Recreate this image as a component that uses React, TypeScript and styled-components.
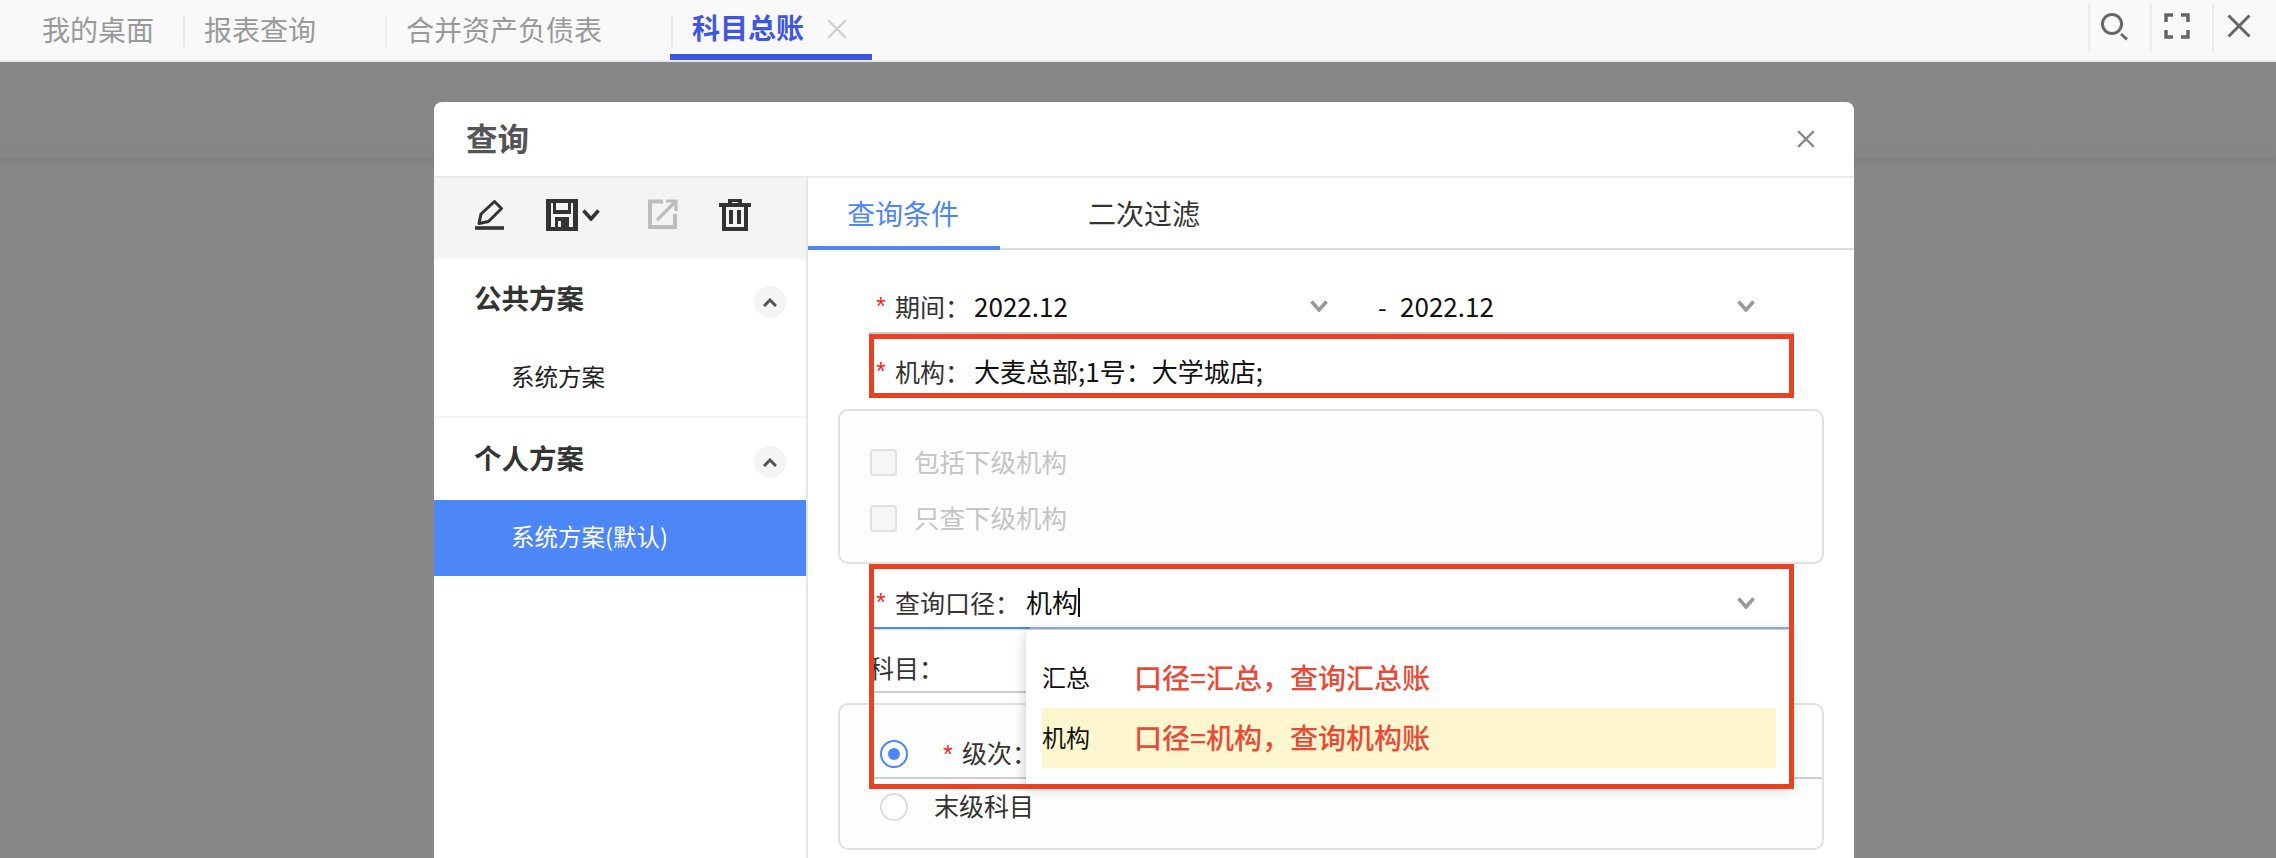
import styled, { createGlobalStyle } from "styled-components";

const GlobalStyle = createGlobalStyle`
  html, body {
    margin: 0;
    height: 858px;
    overflow: hidden;
    background: #888;
    font-family: "Noto Sans CJK SC", "Noto Sans", sans-serif;
  }
  * { box-sizing: border-box; }
  svg { display: block; flex: none; }
`;

const TopBar = styled.header`
  height: 62px;
  display: flex;
  justify-content: space-between;
  background: #f9f9fa;
  border-bottom: 2px solid #e8eaf0;
`;

const Tabs = styled.nav`
  display: flex;
  align-items: flex-start;
  padding-left: 42px;
`;

const Tab = styled.div<{ $trail: number }>`
  height: 60px;
  padding: 0 ${(p) => p.$trail}px 0 19px;
  font-size: 28px;
  line-height: 58px;
  color: #999;
  &:first-child { padding-left: 0; }
`;

const TabSep = styled.i`
  width: 2px;
  height: 31px;
  margin-top: 16px;
  background: #e8eaf0;
`;

const ActiveTab = styled.div`
  width: 202px;
  height: 60px;
  margin-left: -3px;
  padding-left: 22px;
  display: flex;
  gap: 23px;
  align-items: center;
  border-bottom: 6px solid #3f57e0;
  font-size: 28px;
  font-weight: 700;
  color: #3f57e0;
  svg { margin-top: 4px; }
`;

const WinTools = styled.div`
  display: flex;
`;

const WinTool = styled.div<{ $pad: number; $top: number }>`
  width: 62px;
  height: 47px;
  margin-top: 4px;
  padding: ${(p) => p.$top}px 0 0 ${(p) => p.$pad}px;
  border-left: 2px solid #e8eaf0;
  &:last-child { width: 64px; }
`;

const Stage = styled.main`
  height: 796px;
  overflow: hidden;
  padding: 40px 0 0 434px;
  background: linear-gradient(
    to bottom,
    #888 0,
    #858585 96px,
    #808080 98px,
    #848484 101px,
    #888 106px
  );
`;

const Dialog = styled.section`
  width: 1420px;
  height: 800px;
  background: #fff;
  border-radius: 8px 8px 0 0;
`;

const DialogHead = styled.div`
  height: 76px;
  padding: 0 39px 0 32px;
  display: flex;
  align-items: center;
  justify-content: space-between;
  border-bottom: 2px solid #e9e9e9;
`;

const DialogTitle = styled.h2`
  margin: 0;
  padding-bottom: 5px;
  font-size: 31.5px;
  font-weight: 700;
  color: #555;
`;

const DialogBody = styled.div`
  display: flex;
  height: 724px;
`;

const Side = styled.aside`
  width: 374px;
  flex: none;
  border-right: 2px solid #e6e6e6;
`;

const Toolbar = styled.div`
  height: 81px;
  padding: 21px 0 0 41px;
  display: grid;
  grid-template-columns: 71px 36px 66px 71px 32px;
  align-items: start;
  background: #f4f4f4;
`;

const ToolChevron = styled.span`
  padding-top: 10px;
`;

const Section = styled.div`
  & + & {
    padding-top: 1px;
    border-top: 2px solid #f4f4f4;
  }
`;

const SectionHead = styled.div`
  height: 81px;
  padding: 0 20px 0 40px;
  display: flex;
  justify-content: space-between;
  font-size: 27.5px;
  font-weight: 700;
  line-height: 76px;
  color: #333;
`;

const CollapseBtn = styled.span`
  width: 32px;
  height: 32px;
  margin-top: 27px;
  display: flex;
  align-items: center;
  justify-content: center;
  border-radius: 50%;
  background: #f4f4f4;
`;

const Plan = styled.div<{ $active?: boolean }>`
  height: 76px;
  padding-left: 77px;
  font-size: 23.5px;
  line-height: 73px;
  color: ${(p) => (p.$active ? "#fff" : "#222")};
  background: ${(p) => (p.$active ? "#4d86f7" : "transparent")};
`;

const Content = styled.div`
  flex: 1;
  min-width: 0;
`;

const ContentTabs = styled.div`
  height: 72px;
  display: flex;
  border-bottom: 2px solid #ddd;
  font-size: 28px;
`;

const ContentTab = styled.div<{ $active?: boolean }>`
  width: ${(p) => (p.$active ? "192px" : "auto")};
  height: 72px;
  padding-left: ${(p) => (p.$active ? "39px" : "88px")};
  line-height: 70px;
  color: ${(p) => (p.$active ? "#4d86f7" : "#333")};
  border-bottom: ${(p) => (p.$active ? "4px solid #4d86f7" : "none")};
`;

const Form = styled.div`
  padding: 30px 30px 0;
  font-size: 25px;
  color: #333;
`;

const Field = styled.div<{ $height: number; $line?: string; $textTop?: number; $flush?: boolean }>`
  position: relative;
  height: ${(p) => p.$height}px;
  margin: 0 30px 0 31px;
  padding: ${(p) => p.$textTop ?? 0}px 39px 0 ${(p) => (p.$flush ? 0 : 7)}px;
  display: flex;
  align-items: ${(p) => (p.$textTop === undefined ? "center" : "flex-start")};
  border-bottom: 2px solid ${(p) => p.$line ?? "transparent"};
`;

const Star = styled.span`
  width: 19px;
  flex: none;
  color: #f0281e;
  font-family: "Liberation Sans", sans-serif;
  line-height: 36px;
`;

const Label = styled.span<{ $gap?: number }>`
  flex: none;
  margin-right: ${(p) => p.$gap ?? 4}px;
`;

const Value = styled.span`
  font-size: 26px;
  line-height: 36px;
  color: #111;
  white-space: nowrap;
`;

const RangeCell = styled.div<{ $width?: number }>`
  width: ${(p) => (p.$width ? `${p.$width}px` : "auto")};
  flex: ${(p) => (p.$width ? "none" : "1")};
  display: flex;
  align-items: center;
  justify-content: space-between;
`;

const RangeDash = styled.span`
  width: 72px;
  flex: none;
  padding-left: 50px;
  color: #111;
`;

const Caret = styled.i`
  width: 2px;
  height: 29px;
  margin-top: 4px;
  background: #111;
`;

const FieldEnd = styled.span`
  margin-left: auto;
  padding-top: 13px;
`;

const Group = styled.div<{ $height: number; $top: number; $gapBefore?: number }>`
  height: ${(p) => p.$height}px;
  margin-top: ${(p) => p.$gapBefore ?? 0}px;
  padding-top: ${(p) => p.$top}px;
  background: #fdfdfd;
  border: 2px solid #e0e0e0;
  border-radius: 10px;
`;

const CheckRow = styled.label`
  height: 56px;
  padding-left: 30px;
  display: flex;
  align-items: center;
  gap: 17px;
  font-size: 25.5px;
  color: #c4c4c4;
`;

const CheckBox = styled.span`
  width: 27px;
  height: 27px;
  background: #f6f6f6;
  border: 2px solid #e0e0e0;
  border-radius: 4px;
`;

const RaisedText = styled.span`
  padding-bottom: 4px;
`;

const RadioRow = styled.div<{ $height: number; $line?: boolean }>`
  height: ${(p) => p.$height}px;
  margin-left: 33px;
  padding-left: 7px;
  display: flex;
  align-items: center;
  border-bottom: 2px solid ${(p) => (p.$line ? "#ccc" : "transparent")};
`;

const Radio = styled.span<{ $on?: boolean }>`
  width: 28px;
  height: 28px;
  flex: none;
  margin-right: 26px;
  display: flex;
  align-items: center;
  justify-content: center;
  border-radius: 50%;
  border: 2px solid ${(p) => (p.$on ? "#4d86f7" : "#ddd")};
  background: #fff;
  &::after {
    content: "";
    width: 12px;
    height: 12px;
    border-radius: 50%;
    background: ${(p) => (p.$on ? "#4d86f7" : "transparent")};
  }
`;

const RadioStar = styled(Star)`
  width: 28px;
  padding-left: 9px;
`;

const RedFrame = styled.div<{ $height?: number }>`
  position: absolute;
  left: 0;
  right: 0;
  top: 0;
  height: ${(p) => (p.$height ? `${p.$height}px` : "100%")};
  border: 5px solid #e94124;
  z-index: 3;
  pointer-events: none;
`;

const FocusLine = styled.i`
  position: absolute;
  left: 5px;
  right: 5px;
  bottom: -2px;
  height: 2px;
  background: linear-gradient(to right, #4d86f7 0, #4d86f7 156px, #8fb2ee 156px);
  box-shadow: 0 1px 0 #ddd;
`;

const Menu = styled.div`
  position: absolute;
  left: 157px;
  top: 66px;
  width: 764px;
  height: 156px;
  padding: 18px 14px 0 16px;
  background: #fff;
  box-shadow: 0 2px 12px rgba(0, 0, 0, 0.22);
  z-index: 2;
`;

const Option = styled.div<{ $hover?: boolean }>`
  height: 60px;
  padding-bottom: 3px;
  display: flex;
  align-items: center;
  background: ${(p) => (p.$hover ? "#fef6cf" : "transparent")};
`;

const OptionName = styled.span`
  width: 92px;
  font-size: 24px;
  color: #111;
`;

const OptionNote = styled.span`
  font-size: 28px;
  font-weight: 500;
  color: #ea4a35;
`;

const Chevron = ({ color = "#999" }: { color?: string }) => (
  <svg width="18" height="12" viewBox="0 0 18 12" fill="none" stroke={color} strokeWidth="3.6">
    <path d="M1.500 1.500 9 10l7.500-8.500" />
  </svg>
);

const PencilIcon = () => (
  <svg width="29" height="31" viewBox="0 0 29 31" fill="none" stroke="#333" strokeWidth="3">
    <path d="M4 24.500 6 15 19.500 2.500l7 7L13.500 22.500z" strokeLinejoin="round" />
    <path d="M0 29h29" strokeWidth="3.600" />
  </svg>
);

const SaveIcon = () => (
  <svg width="32" height="32" viewBox="0 0 32 32" fill="#333">
    <path fillRule="evenodd" d="M0 0h32v32H0zM5 4v24h4V18h14v10h4V4h-2v11H7V4zM10 4v7h12V4zM12 22v6h3v-6z" />
  </svg>
);

const ShareIcon = () => (
  <svg width="30" height="30" viewBox="0 0 30 30" fill="none" stroke="#bdbdbd" strokeWidth="4">
    <path d="M15 2.500H2v25.500h25V15" />
    <path d="M9 21 27 3M18 2h10v10" strokeWidth="3.200" />
  </svg>
);

const TrashIcon = () => (
  <svg width="32" height="32" viewBox="0 0 32 32" fill="#333">
    <path fillRule="evenodd" d="M9 0h14v4h9v4h-3v24H3V8H0V4h9zM13 3v1h6V3zM7 8v20h18V8zM10 11h4v14h-4zM18 11h4v14h-4z" />
  </svg>
);

const CollapseIcon = () => (
  <svg width="14" height="9" viewBox="0 0 14 9" fill="none" stroke="#555" strokeWidth="3">
    <path d="M1 8l6-6 6 6" />
  </svg>
);

const CrossIcon = ({ size, color, width }: { size: number; color: string; width: number }) => (
  <svg width={size} height={size} viewBox="0 0 24 24" fill="none" stroke={color} strokeWidth={width}>
    <path d="M1.500 1.500l21 21M22.500 1.500l-21 21" />
  </svg>
);

const SearchIcon = () => (
  <svg width="32" height="32" viewBox="0 0 32 32" fill="none" stroke="#666" strokeWidth="3">
    <circle cx="12" cy="13" r="9.500" />
    <path d="M21 23l6 5.500" />
  </svg>
);

const ExpandIcon = () => (
  <svg width="26" height="26" viewBox="0 0 26 26" fill="none" stroke="#666" strokeWidth="3.500">
    <path d="M9 2H2v7M17 2h7v7M9 24H2v-7M17 24h7v-7" />
  </svg>
);

const App = () => {
  return (
    <>
      <GlobalStyle />
      <TopBar>
        <Tabs>
          <Tab $trail={29}>我的桌面</Tab>
          <TabSep />
          <Tab $trail={69}>报表查询</Tab>
          <TabSep />
          <Tab $trail={69}>合并资产负债表</Tab>
          <TabSep />
          <ActiveTab>
            科目总账
            <CrossIcon size={20} color="#ccc" width={2.4} />
          </ActiveTab>
        </Tabs>
        <WinTools>
          <WinTool $pad={10} $top={7}><SearchIcon /></WinTool>
          <WinTool $pad={12} $top={9}><ExpandIcon /></WinTool>
          <WinTool $pad={13} $top={10}><CrossIcon size={24} color="#666" width={3} /></WinTool>
        </WinTools>
      </TopBar>
      <Stage>
        <Dialog>
          <DialogHead>
            <DialogTitle>查询</DialogTitle>
            <CrossIcon size={18} color="#888" width={3} />
          </DialogHead>
          <DialogBody>
            <Side>
              <Toolbar>
                <PencilIcon />
                <SaveIcon />
                <ToolChevron><Chevron color="#333" /></ToolChevron>
                <ShareIcon />
                <TrashIcon />
              </Toolbar>
              <Section>
                <SectionHead>
                  公共方案
                  <CollapseBtn><CollapseIcon /></CollapseBtn>
                </SectionHead>
                <Plan>系统方案</Plan>
              </Section>
              <Section>
                <SectionHead>
                  个人方案
                  <CollapseBtn><CollapseIcon /></CollapseBtn>
                </SectionHead>
                <Plan $active>系统方案(默认)</Plan>
              </Section>
            </Side>
            <Content>
              <ContentTabs>
                <ContentTab $active>查询条件</ContentTab>
                <ContentTab>二次过滤</ContentTab>
              </ContentTabs>
              <Form>
                <Field $height={54} $line="#ccc">
                  <Star>*</Star>
                  <Label>期间：</Label>
                  <RangeCell $width={354}>
                    <Value>2022.12</Value>
                    <Chevron />
                  </RangeCell>
                  <RangeDash>-</RangeDash>
                  <RangeCell>
                    <Value>2022.12</Value>
                    <Chevron />
                  </RangeCell>
                </Field>
                <Field $height={66} $textTop={19}>
                  <Star>*</Star>
                  <Label>机构：</Label>
                  <Value>大麦总部;1号：大学城店;</Value>
                  <RedFrame />
                </Field>
                <Group $height={155} $top={23} $gapBefore={9}>
                  <CheckRow><CheckBox /><RaisedText>包括下级机构</RaisedText></CheckRow>
                  <CheckRow><CheckBox /><RaisedText>只查下级机构</RaisedText></CheckRow>
                </Group>
                <Field $height={65} $textTop={20}>
                  <Star>*</Star>
                  <Label $gap={6}>查询口径：</Label>
                  <Value>机构</Value>
                  <Caret />
                  <FieldEnd><Chevron /></FieldEnd>
                  <FocusLine />
                  <Menu>
                    <Option>
                      <OptionName>汇总</OptionName>
                      <OptionNote>口径=汇总，查询汇总账</OptionNote>
                    </Option>
                    <Option $hover>
                      <OptionName>机构</OptionName>
                      <OptionNote>口径=机构，查询机构账</OptionNote>
                    </Option>
                  </Menu>
                  <RedFrame $height={225} />
                </Field>
                <Field $height={64} $line="#ccc" $textTop={20} $flush>
                  <Label>科目：</Label>
                </Field>
                <Group $height={147} $top={26} $gapBefore={10}>
                  <RadioRow $height={48} $line>
                    <Radio $on />
                    <RadioStar>*</RadioStar>
                    <RaisedText>级次：</RaisedText>
                  </RadioRow>
                  <RadioRow $height={58}>
                    <Radio />
                    <RaisedText>末级科目</RaisedText>
                  </RadioRow>
                </Group>
              </Form>
            </Content>
          </DialogBody>
        </Dialog>
      </Stage>
    </>
  );
};

export default App;
